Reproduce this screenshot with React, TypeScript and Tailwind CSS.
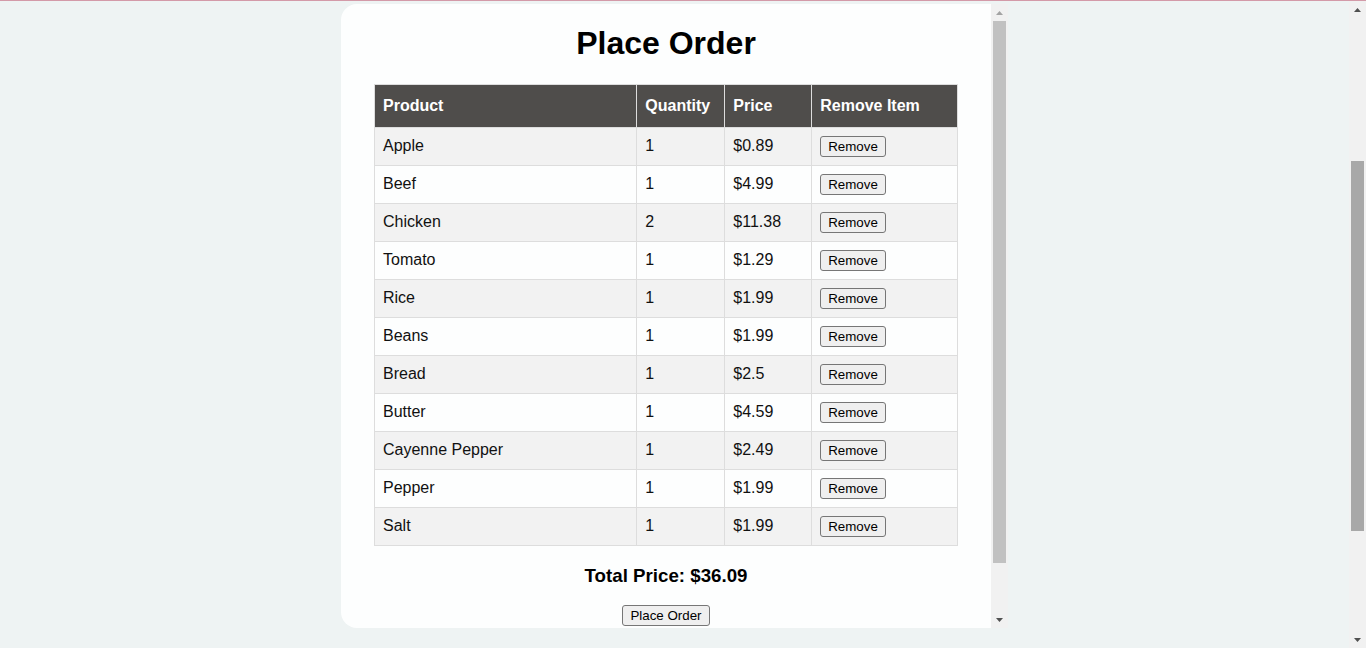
import * as React from "react";

type Item = { name: string; qty: number; price: string };

const ITEMS: Item[] = [
  { name: "Apple", qty: 1, price: "$0.89" },
  { name: "Beef", qty: 1, price: "$4.99" },
  { name: "Chicken", qty: 2, price: "$11.38" },
  { name: "Tomato", qty: 1, price: "$1.29" },
  { name: "Rice", qty: 1, price: "$1.99" },
  { name: "Beans", qty: 1, price: "$1.99" },
  { name: "Bread", qty: 1, price: "$2.5" },
  { name: "Butter", qty: 1, price: "$4.59" },
  { name: "Cayenne Pepper", qty: 1, price: "$2.49" },
  { name: "Pepper", qty: 1, price: "$1.99" },
  { name: "Salt", qty: 1, price: "$1.99" },
];

// native-looking button, preflight strips the defaults
const btn =
  "border border-[#767676] rounded-[3px] bg-[#efefef] px-[7px] py-px text-[13.33px] leading-[17px] text-black";

const th = "border border-[#dddddd] px-2 py-3 text-left font-bold text-white leading-[18px]";
const td = "border border-[#dddddd] px-2 py-2 text-[#111] leading-[18px]";

function Arrow({ down = false, dim = false }: { down?: boolean; dim?: boolean }) {
  return (
    <div className="h-[17px] flex items-center justify-center shrink-0">
      <svg width="7" height="4" viewBox="0 0 7 4">
        <polygon
          points={down ? "0,0 7,0 3.5,4" : "3.5,0 7,4 0,4"}
          fill={dim ? "#a3a3a3" : "#505050"}
        />
      </svg>
    </div>
  );
}

// classic scrollbar look: arrow buttons + thumb
function Scrollbar({ thumb, atTop = false }: { thumb: string; atTop?: boolean }) {
  return (
    <div className="w-[17px] shrink-0 flex flex-col bg-[#f1f1f1]">
      <Arrow dim={atTop} />
      <div className="flex-1 px-[2px]">
        <div className={thumb} />
      </div>
      <Arrow down />
    </div>
  );
}

export default function App() {
  return (
    <div className="h-screen w-full flex flex-col font-['Liberation_Sans',Arial,sans-serif]">
      <div className="h-px w-full bg-[#d39aa8] shrink-0" />
      <div className="flex-1 flex min-h-0">
        <div className="flex-1 bg-[#eef3f3] pt-[3px]">
          <div className="mx-auto w-[667px] h-[624px] flex rounded-l-2xl overflow-hidden">
            <div className="flex-1 bg-[#fdfefe] overflow-hidden">
              <h1 className="my-[21.44px] text-center text-[32px] font-bold text-black leading-[37px]">
                Place Order
              </h1>

              <table className="mx-auto w-[584px] border-collapse text-[16px]">
                <thead>
                  <tr className="bg-[#4f4d4b]">
                    <th className={`${th} w-[263px]`}>Product</th>
                    <th className={`${th} w-[88px]`}>Quantity</th>
                    <th className={`${th} w-[87px]`}>Price</th>
                    <th className={`${th} w-[146px]`}>Remove Item</th>
                  </tr>
                </thead>
                <tbody>
                  {ITEMS.map((it, i) => (
                    <tr key={it.name} className={i % 2 === 0 ? "bg-[#f2f2f2]" : "bg-[#fdfefe]"}>
                      <td className={td}>{it.name}</td>
                      <td className={td}>{it.qty}</td>
                      <td className={td}>{it.price}</td>
                      <td className={td}>
                        <button type="button" className={btn}>
                          Remove
                        </button>
                      </td>
                    </tr>
                  ))}
                </tbody>
              </table>

              <h3 className="my-[18.72px] text-center text-[18.72px] font-bold text-black leading-[22px]">
                Total Price: $36.09
              </h3>

              <div className="flex justify-center">
                <button type="button" className={btn}>
                  Place Order
                </button>
              </div>
            </div>
            <Scrollbar atTop thumb="h-[542px] bg-[#c1c1c1]" />
          </div>
        </div>
        <Scrollbar thumb="mt-[143px] h-[370px] bg-[#a8a8a8]" />
      </div>
    </div>
  );
}
